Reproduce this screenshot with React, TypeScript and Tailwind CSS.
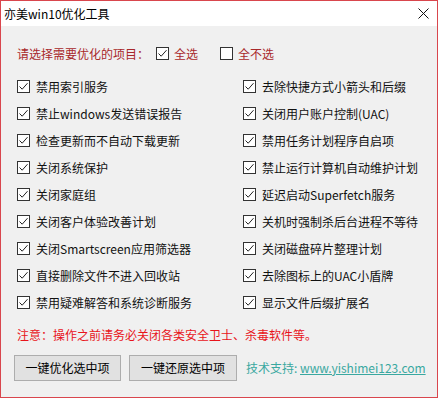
import React from "react";

const leftItems = [
  "禁用索引服务",
  "禁止windows发送错误报告",
  "检查更新而不自动下载更新",
  "关闭系统保护",
  "关闭家庭组",
  "关闭客户体验改善计划",
  "关闭Smartscreen应用筛选器",
  "直接删除文件不进入回收站",
  "禁用疑难解答和系统诊断服务",
];

const rightItems = [
  "去除快捷方式小箭头和后缀",
  "关闭用户账户控制(UAC)",
  "禁用任务计划程序自启项",
  "禁止运行计算机自动维护计划",
  "延迟启动Superfetch服务",
  "关机时强制杀后台进程不等待",
  "关闭磁盘碎片整理计划",
  "去除图标上的UAC小盾牌",
  "显示文件后缀扩展名",
];

const CheckBox = ({ checked }: { checked: boolean }) => (
  <span className="w-[13px] h-[13px] border border-[#333333] bg-white flex items-center justify-center shrink-0">
    {checked && (
      <svg width="11" height="11" viewBox="0 0 11 11" fill="none">
        <path d="M1.5 5.5 L4.2 8.2 L9.5 2.2" stroke="#222" strokeWidth="1" />
      </svg>
    )}
  </span>
);

const Row = ({ label }: { label: string }) => (
  <div className="h-[27px] flex items-center gap-[6px]">
    <CheckBox checked />
    <span className="text-[12px] text-[#111]">{label}</span>
  </div>
);

export default function App() {
  return (
    <div
      className="w-[438px] h-[398px] border border-[#d9464d] bg-[#f0f0f0] flex flex-col overflow-hidden"
      style={{ fontFamily: '"Microsoft YaHei", "Noto Sans CJK SC", sans-serif' }}
    >
      {/* title bar */}
      <div className="h-[25px] bg-white flex items-center justify-between pl-[3px] pr-[8px] shrink-0">
        <span className="text-[12px] text-black">亦美win10优化工具</span>
        <svg width="11" height="11" viewBox="0 0 11 11">
          <path d="M0.5 0.5 L10.5 10.5 M10.5 0.5 L0.5 10.5" stroke="#111" strokeWidth="1" />
        </svg>
      </div>

      <div className="flex flex-col pl-[16px] pt-[14px]">
        {/* header */}
        <div className="h-[27px] flex items-center text-[12px] text-[#a8282b]">
          <span className="w-[139px]">请选择需要优化的项目：</span>
          <span className="flex items-center gap-[5px] w-[64px]">
            <CheckBox checked />
            全选
          </span>
          <span className="flex items-center gap-[5px]">
            <CheckBox checked={false} />
            全不选
          </span>
        </div>

        {/* options */}
        <div className="mt-[6px] grid grid-cols-[226px_1fr]">
          <div className="flex flex-col">
            {leftItems.map((t) => (
              <Row key={t} label={t} />
            ))}
          </div>
          <div className="flex flex-col">
            {rightItems.map((t) => (
              <Row key={t} label={t} />
            ))}
          </div>
        </div>

        {/* notice */}
        <div className="h-[20px] mt-[9px] flex items-center text-[12px] text-[#e8141b]">
          注意：操作之前请务必关闭各类安全卫士、杀毒软件等。
        </div>

        {/* buttons */}
        <div className="mt-[10px] flex items-center -ml-[3px]">
          <button className="w-[107px] h-[26px] bg-[#e1e1e1] border border-[#adadad] text-[12px] text-black">
            一键优化选中项
          </button>
          <button className="ml-[8px] w-[108px] h-[26px] bg-[#e1e1e1] border border-[#adadad] text-[12px] text-black">
            一键还原选中项
          </button>
          <span className="ml-[9px] text-[12px] text-[#3aa8a0]">
            技术支持: <span className="underline">www.yishimei123.com</span>
          </span>
        </div>
      </div>
    </div>
  );
}
